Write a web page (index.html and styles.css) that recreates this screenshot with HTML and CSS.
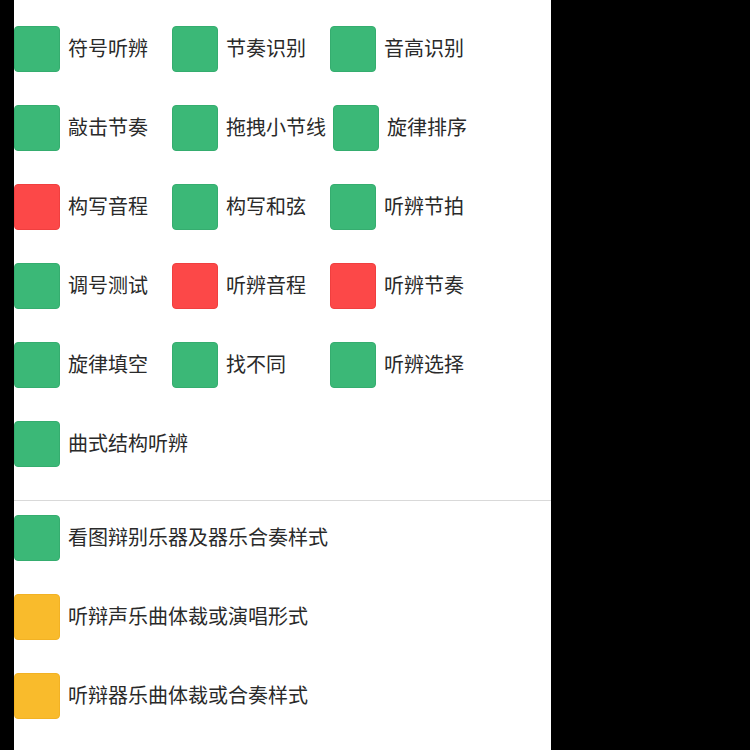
FILE: index.html
```html
<!DOCTYPE html>
<html lang="zh">
<head>
<meta charset="utf-8">
<title>练习</title>
<link rel="stylesheet" href="styles.css">
</head>
<body>
<div class="screen">
  <div class="panel">
    <div class="section section-top">
      <div class="item"><span class="sq green"></span><span class="label">符号听辨</span></div>
      <div class="item"><span class="sq green"></span><span class="label">节奏识别</span></div>
      <div class="item"><span class="sq green"></span><span class="label">音高识别</span></div>
      <div class="item"><span class="sq green"></span><span class="label">敲击节奏</span></div>
      <div class="item"><span class="sq green"></span><span class="label">拖拽小节线</span></div>
      <div class="item"><span class="sq green"></span><span class="label">旋律排序</span></div>
      <div class="item"><span class="sq red"></span><span class="label">构写音程</span></div>
      <div class="item"><span class="sq green"></span><span class="label">构写和弦</span></div>
      <div class="item"><span class="sq green"></span><span class="label">听辨节拍</span></div>
      <div class="item"><span class="sq green"></span><span class="label">调号测试</span></div>
      <div class="item"><span class="sq red"></span><span class="label">听辨音程</span></div>
      <div class="item"><span class="sq red"></span><span class="label">听辨节奏</span></div>
      <div class="item"><span class="sq green"></span><span class="label">旋律填空</span></div>
      <div class="item"><span class="sq green"></span><span class="label">找不同</span></div>
      <div class="item"><span class="sq green"></span><span class="label">听辨选择</span></div>
      <div class="item"><span class="sq green"></span><span class="label">曲式结构听辨</span></div>
    </div>
    <div class="divider"></div>
    <div class="section section-bottom">
      <div class="item wide"><span class="sq green"></span><span class="label">看图辩别乐器及器乐合奏样式</span></div>
      <div class="item wide"><span class="sq yellow"></span><span class="label">听辩声乐曲体裁或演唱形式</span></div>
      <div class="item wide"><span class="sq yellow"></span><span class="label">听辩器乐曲体裁或合奏样式</span></div>
    </div>
  </div>
</div>
</body>
</html>
```

FILE: styles.css
```css
html, body {
  margin: 0;
  padding: 0;
  background: #000;
}
body {
  font-family: "Noto Sans CJK SC", "Noto Sans", sans-serif;
  color: #2a2a2a;
}
.screen {
  width: 750px;
  height: 750px;
  padding-left: 14px;
  box-sizing: border-box;
  overflow: hidden;
}
.panel {
  width: 537px;
  height: 750px;
  background: #fff;
}
.section {
  display: flex;
  flex-wrap: wrap;
  row-gap: 33px;
}
.section-top {
  padding-top: 26px;
  padding-bottom: 33px;
}
.section-bottom {
  padding-top: 14px;
  flex-direction: column;
}
.divider {
  height: 1px;
  background: #d9d9d9;
}
.item {
  display: flex;
  align-items: center;
  min-width: 151px;
  margin-right: 7px;
  height: 46px;
}
.item.wide {
  min-width: 0;
}
.sq {
  flex: none;
  width: 46px;
  height: 46px;
  box-sizing: border-box;
  border-radius: 4px;
  margin-right: 8px;
}
.green {
  background: #3bb877;
  border: 1px solid #35ad6f;
}
.red {
  background: #fc4848;
  border: 1px solid #f03f3f;
}
.yellow {
  background: #f9bb2c;
  border: 1px solid #f2b224;
}
.label {
  font-size: 20px;
  line-height: 28px;
  padding-bottom: 3px;
  white-space: nowrap;
}
```
